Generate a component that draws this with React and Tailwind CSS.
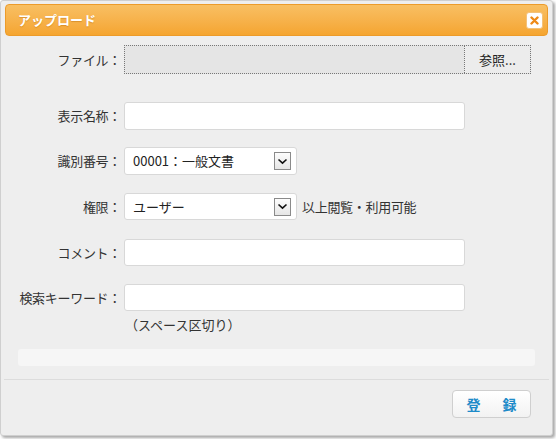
import React from "react";

const font = { fontFamily: '"Noto Sans CJK JP", "Noto Sans", sans-serif' };

function Label({ children }) {
  return (
    <div className="w-[120px] shrink-0 text-right text-[13px] text-[#333] whitespace-nowrap tracking-[-0.3px]">
      {children}
    </div>
  );
}

function Chevron() {
  return (
    <div className="w-[17px] h-[18px] border border-[#8a8a8a] bg-gradient-to-b from-[#fdfdfd] to-[#e6e6e6] flex items-center justify-center mr-[5px]">
      <svg width="11" height="7" viewBox="0 0 11 7">
        <path d="M1.5 1.5 L5.5 5.2 L9.5 1.5" fill="none" stroke="#111" strokeWidth="1.6" />
      </svg>
    </div>
  );
}

export default function App() {
  return (
    <div className="w-[556px] h-[439px] bg-white" style={font}>
      <div className="w-[553px] h-[436px] bg-[#eeeeee] border border-[#cfcfcf] rounded-[3px] shadow-[2px_2px_3px_rgba(0,0,0,0.35)] flex flex-col">
        {/* Title bar */}
        <div className="mx-[4px] mt-[3px] h-[32px] rounded-[4px] border border-[#ec9b2a] bg-gradient-to-b from-[#f8bf62] to-[#f5a52f] flex items-center justify-between pl-[12px] pr-[4px]">
          <span className="text-white font-bold text-[13px] [text-shadow:0_1px_1px_rgba(180,100,0,0.4)]">アップロード</span>
          <div className="w-[17px] h-[17px] rounded-[3px] bg-white border border-[#f3c27a] flex items-center justify-center">
            <svg width="9" height="9" viewBox="0 0 9 9">
              <path d="M1.5 1.5 L7.5 7.5 M7.5 1.5 L1.5 7.5" stroke="#ee8a17" strokeWidth="2.4" strokeLinecap="round" />
            </svg>
          </div>
        </div>

        {/* File row */}
        <div className="flex items-center mt-[9px] gap-[3px]">
          <Label>ファイル：</Label>
          <div className="w-[407px] h-[29px] border border-dotted border-[#777] bg-[#e5e5e5] flex justify-end">
            <div className="w-[66px] h-full border-l border-dotted border-[#777] bg-[#ececec] flex items-center justify-center text-[13px] text-[#222]">
              参照...
            </div>
          </div>
        </div>

        {/* Display name */}
        <div className="flex items-center mt-[28px] gap-[3px]">
          <Label>表示名称：</Label>
          <div className="w-[341px] h-[28px] bg-white border border-[#d8d8d8] rounded-[3px]" />
        </div>

        {/* ID select */}
        <div className="flex items-center mt-[17px] gap-[3px]">
          <Label>識別番号：</Label>
          <div className="w-[173px] h-[28px] bg-white border border-[#d8d8d8] rounded-[3px] flex items-center justify-between pl-[8px]">
            <span className="text-[13px] text-[#222]">00001：一般文書</span>
            <Chevron />
          </div>
        </div>

        {/* Permission select */}
        <div className="flex items-center mt-[18px] gap-[3px]">
          <Label>権限：</Label>
          <div className="w-[173px] h-[27px] bg-white border border-[#d8d8d8] rounded-[3px] flex items-center justify-between pl-[8px]">
            <span className="text-[13px] text-[#222]">ユーザー</span>
            <Chevron />
          </div>
          <span className="text-[13px] text-[#333] ml-[2px] tracking-[-0.3px]">以上閲覧・利用可能</span>
        </div>

        {/* Comment */}
        <div className="flex items-center mt-[19px] gap-[3px]">
          <Label>コメント：</Label>
          <div className="w-[341px] h-[27px] bg-white border border-[#d8d8d8] rounded-[3px]" />
        </div>

        {/* Keywords */}
        <div className="flex items-center mt-[18px] gap-[3px]">
          <Label>検索キーワード：</Label>
          <div className="w-[341px] h-[27px] bg-white border border-[#d8d8d8] rounded-[3px]" />
        </div>
        <div className="ml-[124px] mt-[5px] text-[13px] leading-[18px] text-[#333]">（スペース区切り）</div>

        {/* Progress */}
        <div className="mx-[17px] mt-[15px] h-[17px] rounded-[3px] bg-[#f6f6f6]" />

        {/* Footer */}
        <div className="mx-[3px] mt-[13px] border-t border-[#dcdcdc] flex justify-end pt-[10px] pr-[18px]">
          <div className="w-[79px] h-[28px] rounded-[4px] border border-[#cfcfcf] bg-gradient-to-b from-[#ffffff] to-[#f2f2f2] flex items-center justify-center gap-[22px] text-[14px] font-bold text-[#1e8bc9]">
            <span>登</span>
            <span>録</span>
          </div>
        </div>
      </div>
    </div>
  );
}
